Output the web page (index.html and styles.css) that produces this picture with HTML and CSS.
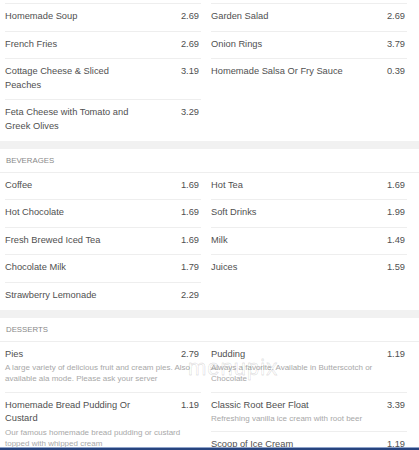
FILE: index.html
```html
<!DOCTYPE html>
<html>
<head>
<meta charset="utf-8">
<link rel="stylesheet" href="styles.css">
</head>
<body>
<div class="page">
  <section class="card card-cut">
    <div class="cols">
      <div class="col">
        <div class="item"><div class="line"><span class="name">Homemade Soup</span><span class="price">2.69</span></div></div>
        <div class="item"><div class="line"><span class="name">French Fries</span><span class="price">2.69</span></div></div>
        <div class="item"><div class="line"><span class="name">Cottage Cheese &amp; Sliced Peaches</span><span class="price">3.19</span></div></div>
        <div class="item"><div class="line"><span class="name">Feta Cheese with Tomato and Greek Olives</span><span class="price">3.29</span></div></div>
      </div>
      <div class="col">
        <div class="item"><div class="line"><span class="name">Garden Salad</span><span class="price">2.69</span></div></div>
        <div class="item"><div class="line"><span class="name">Onion Rings</span><span class="price">3.79</span></div></div>
        <div class="item"><div class="line"><span class="name">Homemade Salsa Or Fry Sauce</span><span class="price">0.39</span></div></div>
      </div>
    </div>
  </section>

  <section class="card">
    <h2 class="cat">BEVERAGES</h2>
    <div class="cols">
      <div class="col">
        <div class="item"><div class="line"><span class="name">Coffee</span><span class="price">1.69</span></div></div>
        <div class="item"><div class="line"><span class="name">Hot Chocolate</span><span class="price">1.69</span></div></div>
        <div class="item"><div class="line"><span class="name">Fresh Brewed Iced Tea</span><span class="price">1.69</span></div></div>
        <div class="item"><div class="line"><span class="name">Chocolate Milk</span><span class="price">1.79</span></div></div>
        <div class="item"><div class="line"><span class="name">Strawberry Lemonade</span><span class="price">2.29</span></div></div>
      </div>
      <div class="col">
        <div class="item"><div class="line"><span class="name">Hot Tea</span><span class="price">1.69</span></div></div>
        <div class="item"><div class="line"><span class="name">Soft Drinks</span><span class="price">1.99</span></div></div>
        <div class="item"><div class="line"><span class="name">Milk</span><span class="price">1.49</span></div></div>
        <div class="item"><div class="line"><span class="name">Juices</span><span class="price">1.59</span></div></div>
      </div>
    </div>
  </section>

  <section class="card card-last">
    <h2 class="cat">DESSERTS</h2>
    <div class="cols">
      <div class="col">
        <div class="item"><div class="line"><span class="name">Pies</span><span class="price">2.79</span></div><p class="desc">A large variety of delicious fruit and cream pies. Also available ala mode. Please ask your server</p></div>
        <div class="item"><div class="line"><span class="name">Homemade Bread Pudding Or Custard</span><span class="price">1.19</span></div><p class="desc">Our famous homemade bread pudding or custard topped with whipped cream</p></div>
      </div>
      <div class="col">
        <div class="item"><div class="line"><span class="name">Pudding</span><span class="price">1.19</span></div><p class="desc">Always a favorite. Available in Butterscotch or Chocolate</p></div>
        <div class="item"><div class="line"><span class="name">Classic Root Beer Float</span><span class="price">3.39</span></div><p class="desc">Refreshing vanilla ice cream with root beer</p></div>
        <div class="item"><div class="line"><span class="name">Scoop of Ice Cream</span><span class="price">1.19</span></div></div>
      </div>
    </div>
    <div class="watermark">menupix</div>
  </section>
</div>
<div class="bottom-bar"></div>
</body>
</html>
```

FILE: styles.css
```css
html, body {
  margin: 0;
  padding: 0;
}
body {
  background: #f1f1f1;
  font-family: "Liberation Sans", Arial, sans-serif;
  color: #555;
  overflow: hidden;
  height: 450px;
}
.page {
  display: flex;
  flex-direction: column;
  gap: 8px;
}
.card {
  background: #fff;
  position: relative;
}
.card-cut {
  padding-top: 3px;
}
.cat {
  margin: 0;
  padding: 6px 6px 5px;
  font-size: 7.8px;
  line-height: 12px;
  font-weight: normal;
  color: #888;
  border-bottom: 1px solid #eeeeee;
}
.cols {
  display: grid;
  grid-template-columns: 196px 196px;
  column-gap: 10px;
  padding: 0 12px 0 5px;
  align-items: start;
}
.col {
  display: flex;
  flex-direction: column;
}
.item {
  padding: 6px 2px 7px 0;
  border-top: 1px solid #eeeeee;
}
.card .col .item:first-child {
  border-top: none;
}
.card-cut .col .item:first-child {
  border-top: 1px solid #eeeeee;
}
.line {
  display: flex;
  justify-content: space-between;
  align-items: flex-start;
  font-size: 9.3px;
  line-height: 13.6px;
}
.name {
  width: 136px;
  color: #505050;
}
.price {
  color: #505050;
}
.desc {
  margin: 1px 0 0;
  font-size: 8px;
  line-height: 11.2px;
  color: #a8a8a8;
}
.watermark {
  position: absolute;
  left: 188px;
  top: 37px;
  font-size: 22px;
  letter-spacing: 1px;
  color: transparent;
  -webkit-text-stroke: 0.8px rgba(0, 0, 0, 0.12);
  font-family: "Liberation Sans", Arial, sans-serif;
  pointer-events: none;
}
.bottom-bar {
  position: fixed;
  left: 0;
  right: 0;
  bottom: 0;
  height: 2px;
  background: #27447f;
  box-shadow: 0 -1px 0 #8fa3c9;
}
```
